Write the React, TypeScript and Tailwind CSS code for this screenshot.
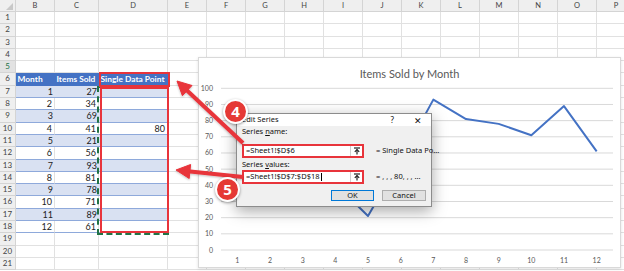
import React from 'react'

const COLS = [
  { k: 'B', w: 'w-[39px]' },
  { k: 'C', w: 'w-[44px]' },
  { k: 'D', w: 'w-[69px]' },
  { k: 'E', w: 'w-[39px]' },
  { k: 'F', w: 'w-[39px]' },
  { k: 'G', w: 'w-[39px]' },
  { k: 'H', w: 'w-[39px]' },
  { k: 'I', w: 'w-[39px]' },
  { k: 'J', w: 'w-[39px]' },
  { k: 'K', w: 'w-[39px]' },
  { k: 'L', w: 'w-[39px]' },
  { k: 'M', w: 'w-[39px]' },
  { k: 'N', w: 'w-[39px]' },
  { k: 'O', w: 'w-[39px]' },
  { k: 'P', w: 'w-[39px]' },
]

const items = [27, 34, 69, 41, 21, 56, 93, 81, 78, 71, 89, 61]

function cellContent(row: number, col: string) {
  if (row === 6) {
    if (col === 'B') return 'Month'
    if (col === 'C') return 'Items Sold'
    if (col === 'D') return 'Single Data Point'
  }
  if (row >= 7 && row <= 18) {
    if (col === 'B') return String(row - 6)
    if (col === 'C') return String(items[row - 7])
    if (col === 'D' && row === 10) return '80'
  }
  return ''
}

function Sheet() {
  const rows = Array.from({ length: 21 }, (_, i) => i + 1)
  return (
    <div className="flex flex-col">
      {/* column headers */}
      <div className="flex h-[12px]">
        <div className="w-[16px] shrink-0 bg-[#efefef] border-r border-b border-[#d4d4d4] relative">
          <svg width="16" height="12" className="absolute left-0 top-0">
            <polygon points="13,3 13,10 6,10" fill="#c8c8c8" />
          </svg>
        </div>
        {COLS.map((c) => (
          <div
            key={c.k}
            className={`${c.w} shrink-0 bg-[#efefef] border-r border-b border-[#d4d4d4] text-[7.5px] leading-[11px] text-center text-[#444]`}
          >
            {c.k}
          </div>
        ))}
      </div>
      {rows.map((r) => {
        const inTable = r >= 6 && r <= 18
        const band = r >= 7 && r <= 18 && r % 2 === 1
        return (
          <div key={r} className="flex h-[12.3px]">
            <div
              className={`w-[16px] shrink-0 border-r border-b border-[#d4d4d4] text-[8px] leading-[11.3px] text-center ${
                r === 5 ? 'bg-[#e2e2e2] text-[#217346]' : 'bg-[#efefef] text-[#444]'
              }`}
            >
              {r}
            </div>
            {COLS.map((c) => {
              const tableCol = inTable && (c.k === 'B' || c.k === 'C' || c.k === 'D')
              const text = cellContent(r, c.k)
              if (tableCol && r === 6) {
                return (
                  <div
                    key={c.k}
                    className={`${c.w} shrink-0 bg-[#4472c4] text-white font-bold text-[8.4px] leading-[12.3px] px-[1.5px] whitespace-nowrap overflow-hidden`}
                  >
                    {text}
                  </div>
                )
              }
              if (tableCol) {
                return (
                  <div
                    key={c.k}
                    className={`${c.w} shrink-0 border-b border-[#8ea9db] text-[9px] leading-[11.3px] px-[2px] text-right ${
                      band ? 'bg-[#d9e1f2]' : 'bg-white border-r border-r-[#e1e1e1]'
                    }`}
                  >
                    {text}
                  </div>
                )
              }
              return (
                <div key={c.k} className={`${c.w} shrink-0 border-r border-b border-[#e1e1e1]`} />
              )
            })}
          </div>
        )
      })}
    </div>
  )
}

function Chart() {
  const x0 = 22
  const step = 392 / 12
  const yOf = (v: number) => 192 - v * 1.617
  const pts = items.map((v, i) => `${x0 + step * (i + 0.5)},${yOf(v)}`).join(' ')
  return (
    <div className="absolute left-[198px] top-[57px] w-[423px] h-[211px] bg-white border border-[#d9d9d9] shadow-[0_1px_3px_rgba(0,0,0,0.12)]">
      <div className="mt-[9px] text-center text-[11px] leading-[14px] text-[#595959]">Items Sold by Month</div>
      <svg width="423" height="211" className="absolute left-0 top-0" fontFamily="Lato, sans-serif">
        {Array.from({ length: 11 }, (_, i) => i * 10).map((v) => (
          <g key={v}>
            <line x1={x0} x2={414} y1={yOf(v)} y2={yOf(v)} stroke="#d9d9d9" strokeWidth="1" />
            <text x="14" y={yOf(v) + 2.5} fontSize="7" fill="#595959" textAnchor="end">
              {v}
            </text>
          </g>
        ))}
        {items.map((_, i) => (
          <text key={i} x={x0 + step * (i + 0.5)} y="204.5" fontSize="7" fill="#595959" textAnchor="middle">
            {i + 1}
          </text>
        ))}
        <polyline points={pts} fill="none" stroke="#4472c4" strokeWidth="2" strokeLinejoin="round" />
      </svg>
    </div>
  )
}

function CollapseIcon() {
  return (
    <svg width="8" height="8" viewBox="0 0 8 8">
      <line x1="1" y1="1" x2="7" y2="1" stroke="#222" strokeWidth="1.2" />
      <line x1="4" y1="2.5" x2="4" y2="7.5" stroke="#222" strokeWidth="1.2" />
      <polyline points="1.8,4.8 4,2.5 6.2,4.8" fill="none" stroke="#222" strokeWidth="1.2" />
    </svg>
  )
}

function RefInput({ value, caret }: { value: string; caret?: boolean }) {
  return (
    <div className="w-[122px] h-[14px] border-2 border-[#e8343b] bg-white flex shrink-0">
      <div className="flex-1 flex items-center px-[2px] text-[7.5px] text-[#111] whitespace-nowrap overflow-hidden">
        {value}
        {caret && <span className="inline-block w-px h-[8px] bg-black ml-[1px]" />}
      </div>
      <div className="w-[12px] flex items-center justify-center border-l border-[#cfcfcf]">
        <CollapseIcon />
      </div>
    </div>
  )
}

function Dialog() {
  return (
    <div className="absolute left-[236px] top-[113px] w-[196px] h-[94px] bg-[#f0f0f0] border border-[#8c8c8c] shadow-[0_4px_14px_rgba(0,0,0,0.35)] font-['Noto_Sans',sans-serif] text-[#111] flex flex-col">
      <div className="h-[12px] bg-white flex items-center px-[5px] text-[7.5px]">
        <span>Edit Series</span>
        <span className="ml-auto mr-[20px] text-[8px]">?</span>
        <span className="mr-[4px] text-[9px] leading-none">✕</span>
      </div>
      <div className="px-[5px] flex flex-col">
        <div className="h-[9px] mt-[1px] text-[7.5px] leading-[9px]">
          Series <span className="underline">n</span>ame:
        </div>
        <div className="flex items-center mt-[8px]">
          <RefInput value="=Sheet1!$D$6" />
          <span className="ml-[12px] text-[7.5px] whitespace-nowrap">= Single Data Po...</span>
        </div>
        <div className="h-[10px] mt-[1px] text-[7.5px] leading-[10px]">
          Series <span className="underline">v</span>alues:
        </div>
        <div className="flex items-center mt-[1px]">
          <RefInput value="=Sheet1!$D$7:$D$18" caret />
          <span className="ml-[12px] text-[7.5px] whitespace-nowrap">= , , , 80, , , ...</span>
        </div>
        <div className="flex justify-end gap-[8px] mt-[6px]">
          <div className="w-[43px] h-[11px] bg-[#e1e1e1] border-[1.5px] border-[#0078d7] text-[7.5px] leading-[8px] text-center">
            OK
          </div>
          <div className="w-[44px] h-[11px] bg-[#e1e1e1] border border-[#adadad] text-[7.5px] leading-[9px] text-center">
            Cancel
          </div>
        </div>
      </div>
    </div>
  )
}

function Overlays() {
  return (
    <>
      {/* copy marquee + red highlight boxes */}
      <div className="absolute left-[97px] top-[86px] w-[72px] h-[149px] border-2 border-dashed border-[#217346]" />
      <div className="absolute left-[99px] top-[72px] w-[71px] h-[15px] border-2 border-[#e8343b]" />
      <div className="absolute left-[100px] top-[87px] w-[69px] h-[146px] border-2 border-[#e8343b]" />
    </>
  )
}

function Callouts() {
  return (
    <>
      <svg width="624" height="271" className="absolute left-0 top-0 pointer-events-none">
        <defs>
          <filter id="sh" x="-20%" y="-20%" width="140%" height="140%">
            <feDropShadow dx="0" dy="1" stdDeviation="1" floodColor="#000" floodOpacity="0.25" />
          </filter>
        </defs>
        <g filter="url(#sh)" fill="#e8343b" stroke="#e8343b">
          <line x1="243" y1="143" x2="185.7" y2="89.2" strokeWidth="4" />
          <polygon points="177,81 192,85.5 182.4,95.7" strokeWidth="1" strokeLinejoin="round" />
          <line x1="243" y1="177" x2="187.9" y2="171.2" strokeWidth="4" />
          <polygon points="176,170 190.6,164.5 189.2,178.5" strokeWidth="1" strokeLinejoin="round" />
        </g>
      </svg>
      <div className="absolute left-[223px] top-[99px] w-[25px] h-[25px] rounded-full bg-[#e53935] border-2 border-white shadow-[0_1px_3px_rgba(0,0,0,0.4)] flex items-center justify-center text-white font-bold text-[15px] font-['Open_Sans',sans-serif]">
        4
      </div>
      <div className="absolute left-[215px] top-[177px] w-[25px] h-[25px] rounded-full bg-[#e53935] border-2 border-white shadow-[0_1px_3px_rgba(0,0,0,0.4)] flex items-center justify-center text-white font-bold text-[15px] font-['Open_Sans',sans-serif]">
        5
      </div>
    </>
  )
}

export default function App() {
  return (
    <div className="relative w-[624px] h-[271px] overflow-hidden bg-white font-[Lato,sans-serif] text-[#222]">
      <Sheet />
      <Overlays />
      <Chart />
      <Dialog />
      <Callouts />
    </div>
  )
}
